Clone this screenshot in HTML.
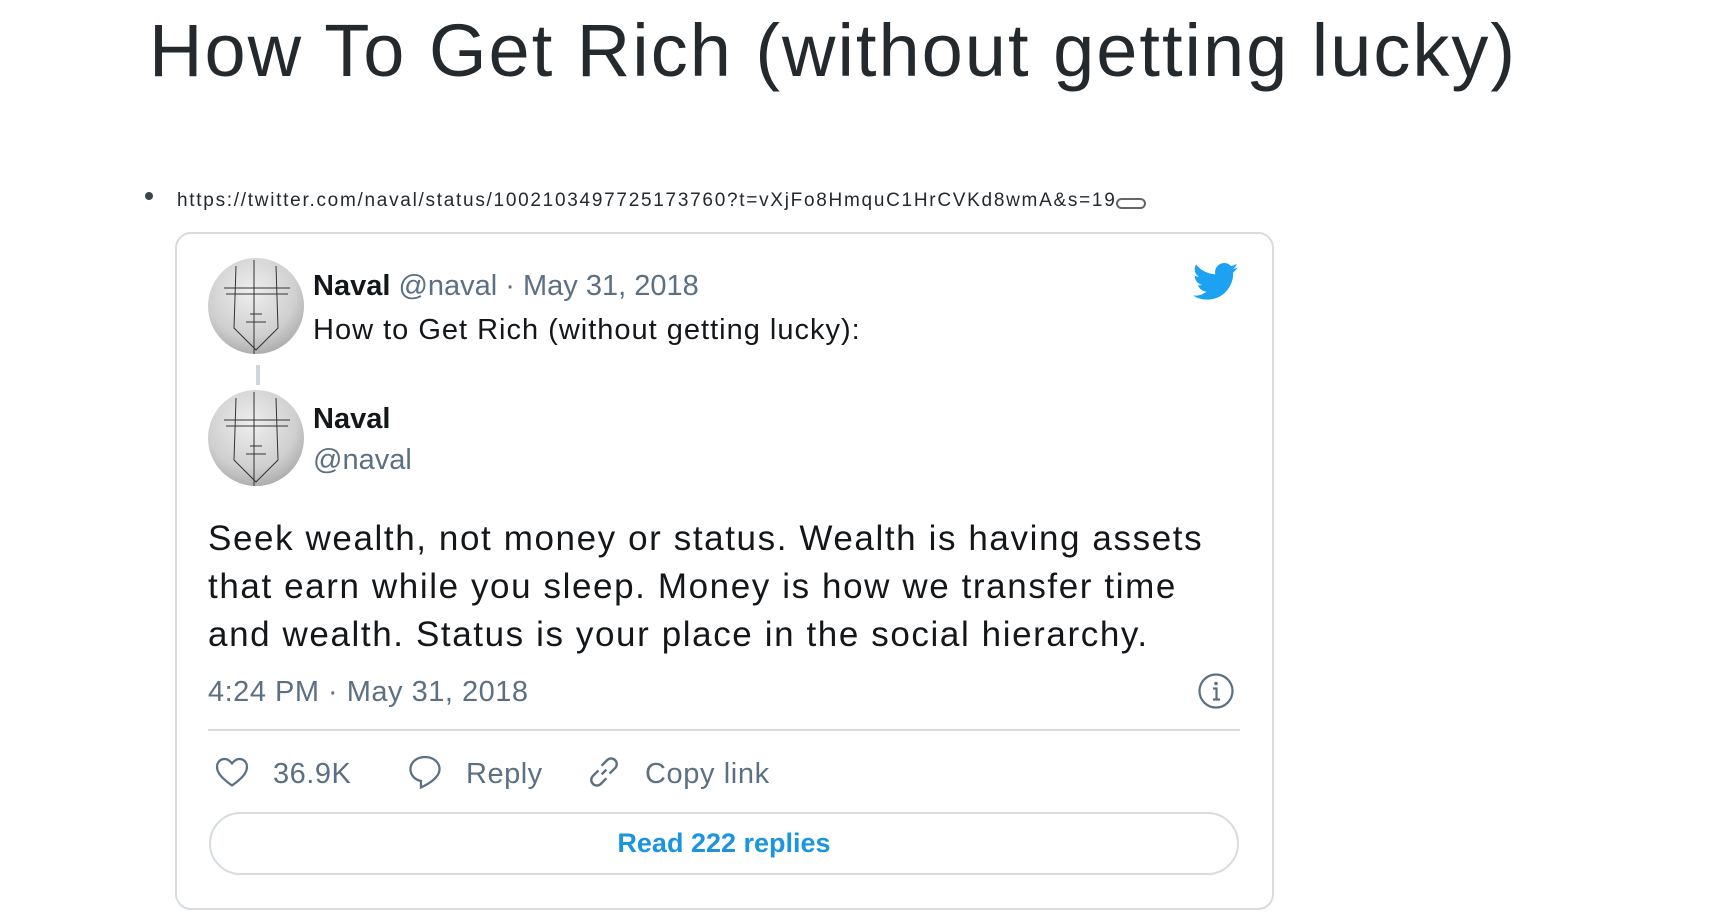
<!DOCTYPE html>
<html><head><meta charset="utf-8"><style>
*{margin:0;padding:0;box-sizing:border-box}
body{width:1716px;height:922px;background:#fff;font-family:"Liberation Sans",sans-serif;position:relative;overflow:hidden}
.a{position:absolute;white-space:nowrap}
h1{position:absolute;left:149px;top:6px;font-size:74px;font-weight:400;color:#24292e;line-height:90px;white-space:nowrap;letter-spacing:2.0px}
.url{left:177px;top:190px;font-size:19px;color:#24292e;letter-spacing:1.72px}
.card{position:absolute;left:175px;top:232px;width:1099px;height:678px;border:2px solid #d6dce0;border-radius:16px}
.av{position:absolute;width:96px;height:96px;border-radius:50%;background:radial-gradient(circle at 45% 35%,#eee,#cfcfcf 55%,#8a8a8a);overflow:hidden}
.g{color:#5b7083}
.d{color:#14171a}
</style></head><body>
<h1>How To Get Rich (without getting lucky)</h1>
<div class="a" style="left:145px;top:192px;width:8px;height:8px;border-radius:50%;background:#3a4450"></div>
<div class="a url">https://twitter.com/naval/status/1002103497725173760?t=vXjFo8HmquC1HrCVKd8wmA&amp;s=19</div>
<div class="a" style="left:1116px;top:198px;width:30px;height:11px;border:2px solid #666;border-radius:6px"></div>
<div class="card"></div>
<div class="av" style="left:208px;top:258px"><svg width="96" height="96"><g stroke="#333" fill="none" stroke-width="1"><path d="M28 8 L26 70 L48 92 L70 70 L68 8"/><path d="M16 30 H82 M18 36 H80"/><path d="M46 2 V96"/><path d="M42 56 H54 M38 64 H58"/></g></svg></div>
<div class="a" style="left:256px;top:365px;width:4px;height:20px;background:#ccd6dd"></div>
<div class="av" style="left:208px;top:390px"><svg width="96" height="96"><g stroke="#333" fill="none" stroke-width="1"><path d="M28 8 L26 70 L48 92 L70 70 L68 8"/><path d="M16 30 H82 M18 36 H80"/><path d="M46 2 V96"/><path d="M42 56 H54 M38 64 H58"/></g></svg></div>
<div class="a" style="left:313px;top:269px;font-size:29px;line-height:34px"><b class="d">Naval</b> <span class="g">@naval · May 31, 2018</span></div>
<div class="a d" style="left:313px;top:313px;font-size:29px;line-height:34px;letter-spacing:1px">How to Get Rich (without getting lucky):</div>
<div class="a d" style="left:313px;top:402px;font-size:29px;line-height:34px;font-weight:700">Naval</div>
<div class="a g" style="left:313px;top:443px;font-size:29px;line-height:34px">@naval</div>
<svg class="a" style="left:1193px;top:262px" width="46" height="40" viewBox="0 0 24 20"><path fill="#1da1f2" d="M23.6 2.4c-.9.4-1.8.6-2.8.8 1-.6 1.8-1.6 2.1-2.7-.9.6-2 1-3.1 1.2C19 .7 17.7.1 16.3.1c-2.7 0-4.8 2.2-4.8 4.8 0 .4 0 .8.1 1.1C7.5 5.8 4 3.9 1.6.9c-.4.7-.7 1.6-.7 2.4 0 1.7.9 3.2 2.2 4-.8 0-1.5-.2-2.2-.6v.1c0 2.3 1.7 4.3 3.9 4.7-.4.1-.8.2-1.3.2-.3 0-.6 0-.9-.1.6 1.9 2.4 3.3 4.5 3.4-1.7 1.3-3.7 2.1-6 2.1-.4 0-.8 0-1.2-.1 2.1 1.4 4.7 2.2 7.4 2.2 8.9 0 13.7-7.4 13.7-13.7v-.6c1-.7 1.8-1.6 2.4-2.5z"/></svg>
<div class="a d" style="left:208px;top:515px;font-size:35px;line-height:48px;letter-spacing:1.6px">Seek wealth, not money or status. Wealth is having assets<br>that earn while you sleep. Money is how we transfer time<br>and wealth. Status is your place in the social hierarchy.</div>
<div class="a g" style="left:208px;top:675px;font-size:29px;line-height:34px;letter-spacing:0.5px">4:24 PM · May 31, 2018</div>
<svg class="a" style="left:1197px;top:672px" width="38" height="38" viewBox="0 0 38 38"><circle cx="19" cy="19" r="16.5" fill="none" stroke="#5b7083" stroke-width="2.2"/><circle cx="19" cy="11.5" r="1.8" fill="#5b7083"/><path d="M16 16.5h3.5v11M16 27.5h7" stroke="#5b7083" stroke-width="2.2" fill="none"/></svg>
<div class="a" style="left:208px;top:729px;width:1032px;height:2px;background:#d6dce0"></div>
<svg class="a" style="left:214px;top:754px" width="36" height="36" viewBox="0 0 24 24"><path d="M12 21C5 16 2 12.5 2 8.5 2 5.5 4.3 3.3 7 3.3c2 0 3.6 1.2 5 3 1.4-1.8 3-3 5-3 2.7 0 5 2.2 5 5.2 0 4-3 7.5-10 12.5z" fill="none" stroke="#5b7083" stroke-width="1.5"/></svg>
<div class="a g" style="left:273px;top:757px;font-size:29px;line-height:34px;letter-spacing:0.5px">36.9K</div>
<svg class="a" style="left:407px;top:753px" width="36" height="38" viewBox="0 0 24 25"><path d="M12 2.5C6.5 2.5 2.3 6 2.3 10.7c0 4 3 7 7 7.8v4.3c4.5-2 12.4-6.5 12.4-12.1C21.7 6 17.5 2.5 12 2.5z" fill="none" stroke="#5b7083" stroke-width="1.5"/></svg>
<div class="a g" style="left:466px;top:757px;font-size:29px;line-height:34px;letter-spacing:0.5px">Reply</div>
<svg class="a" style="left:585px;top:753px" width="38" height="38" viewBox="0 0 24 24"><g fill="none" stroke="#5b7083" stroke-width="1.5"><path d="M10.5 13.5l3-3"/><path d="M8.5 11 5 14.5a3.5 3.5 0 0 0 5 5L13.5 16"/><path d="M15.5 13 19 9.5a3.5 3.5 0 0 0-5-5L10.5 8"/></g></svg>
<div class="a g" style="left:645px;top:757px;font-size:29px;line-height:34px;letter-spacing:0.6px">Copy link</div>
<div class="a" style="left:209px;top:812px;width:1030px;height:63px;border:2px solid #d6dce0;border-radius:32px;text-align:center;font-size:27px;font-weight:700;color:#1b95e0;line-height:59px">Read 222 replies</div>
</body></html>
